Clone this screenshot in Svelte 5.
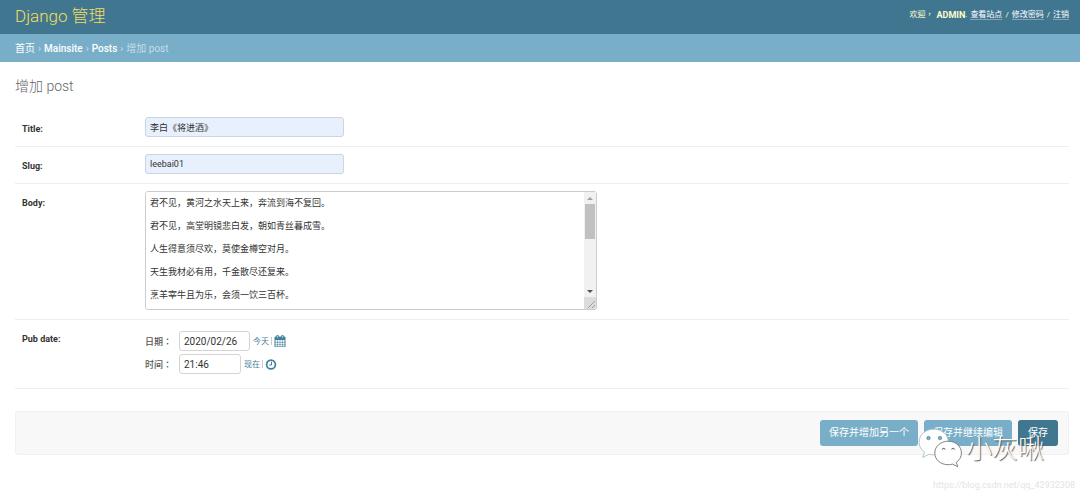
<script>
  let title = $state('李白《将进酒》');
  let slug = $state('leebai01');
  let date = $state('2020/02/26');
  let time = $state('21:46');
  let body = $state(
    [
      '君不见，黄河之水天上来，奔流到海不复回。',
      '君不见，高堂明镜悲白发，朝如青丝暮成雪。',
      '人生得意须尽欢，莫使金樽空对月。',
      '天生我材必有用，千金散尽还复来。',
      '烹羊宰牛且为乐，会须一饮三百杯。',
      '岑夫子，丹丘生，将进酒，杯莫停。',
      '与君歌一曲，请君为我倾耳听。',
      '钟鼓馔玉不足贵，但愿长醉不愿醒。',
      '古来圣贤皆寂寞，惟有饮者留其名。',
      '陈王昔时宴平乐，斗酒十千恣欢谑。',
      '主人何为言少钱，径须沽取对君酌。',
      '五花马，千金裘，呼儿将出换美酒，与尔同销万古愁。'
    ].join('\n')
  );
  let progress = $state(0);
  let area;

  function onScroll(e) {
    const t = e.currentTarget;
    progress = t.scrollTop / Math.max(1, t.scrollHeight - t.clientHeight);
  }
  function step(n) {
    area.scrollBy(0, n);
  }
  function today() {
    const d = new Date();
    date = `${d.getFullYear()}/${String(d.getMonth() + 1).padStart(2, '0')}/${String(d.getDate()).padStart(2, '0')}`;
  }
  function now() {
    time = new Date().toTimeString().slice(0, 5);
  }
</script>

<div class="page">
  <header>
    <h1><a href="#home">Django 管理</a></h1>
    <div class="tools">
      <span class="hello">欢迎，</span>
      <strong>ADMIN</strong><span class="dot">.</span>
      <a href="#site">查看站点</a><span>/</span><a href="#password">修改密码</a><span>/</span><a href="#logout">注销</a>
    </div>
  </header>

  <nav aria-label="breadcrumbs">
    <a href="#home">首页</a><i>›</i><a class="latin" href="#mainsite">Mainsite</a><i>›</i><a class="latin" href="#posts">Posts</a><i>›</i><span>增加 post</span>
  </nav>

  <main>
    <h2>增加 post</h2>
    <form onsubmit={(e) => e.preventDefault()}>
      <div class="row">
        <label class="name" for="title">Title:</label>
        <input id="title" class="wide" type="text" bind:value={title} />
      </div>
      <div class="row">
        <label class="name" for="slug">Slug:</label>
        <input id="slug" class="wide" type="text" bind:value={slug} />
      </div>
      <div class="row">
        <label class="name" for="body">Body:</label>
        <div class="area">
          <textarea id="body" bind:this={area} bind:value={body} onscroll={onScroll}></textarea>
          <div class="bar">
            <button type="button" aria-label="Scroll up" onclick={() => step(-23)}>
              <svg viewBox="0 0 12 12"><path d="M3 8h6L6 5z" fill="#a0a0a0" /></svg>
            </button>
            <div class="track"><div class="thumb" style="top: {progress * 57}%"></div></div>
            <button type="button" aria-label="Scroll down" onclick={() => step(23)}>
              <svg viewBox="0 0 12 12"><path d="M3 5h6L6 8z" fill="#505050" /></svg>
            </button>
            <svg class="grip" viewBox="0 0 12 12"><path d="M4 11l7-7M8 11l3-3" stroke="#a0a0a0" fill="none" /></svg>
          </div>
        </div>
      </div>
      <div class="row pub">
        <span class="name">Pub date:</span>
        <div class="when">
          <div class="line">
            <label for="date">日期：</label>
            <input id="date" class="date" type="text" bind:value={date} />
            <button type="button" class="link" onclick={today}>今天</button><b></b>
            <button type="button" class="icon" aria-label="Calendar">
              <svg viewBox="0 0 12 12">
                <path d="M1 2h10v10H1z" fill="#fff" stroke="#417f9e" />
                <path d="M1 2h10v3H1z" fill="#417f9e" />
                <path d="M3.5 5v7M6 5v7M8.5 5v7M1 7.3h10M1 9.7h10" stroke="#5b93b0" stroke-width=".7" />
                <path d="M3.5 0v3.5M8.5 0v3.5" stroke="#417f9e" stroke-width="2" />
                <path d="M3.5 .7v2.3M8.5 .7v2.3" stroke="#c5dce7" stroke-width=".7" />
              </svg>
            </button>
          </div>
          <div class="line">
            <label for="time">时间：</label>
            <input id="time" class="time" type="text" bind:value={time} />
            <button type="button" class="link" onclick={now}>现在</button><b></b>
            <button type="button" class="icon" aria-label="Clock">
              <svg viewBox="0 0 12 12" fill="none" stroke="#417f9e">
                <circle cx="6" cy="6.500" r="4.400" stroke-width="1.700" />
                <path d="M6.500 3.700v3.300H4.200" />
              </svg>
            </button>
          </div>
        </div>
      </div>
      <div class="submit">
        <button type="submit">保存并增加另一个</button>
        <button type="submit">保存并继续编辑</button>
        <button type="submit" class="default">保存</button>
      </div>
    </form>
  </main>

  <div class="mark">
    <svg viewBox="0 0 44 40">
      <g fill="#fff" stroke="#777" stroke-width=".9" stroke-linejoin="round">
        <path d="M16 2C8 2 2 7.500 2 14.500c0 4 2 7.200 5.200 9.600L5.500 29l6-3c1.500.4 3 .6 4.500.6 8 0 14-5 14-12.100S24 2 16 2z" stroke="#a9c3cf" />
        <path d="M30 13.500c-7.500 0-13 5-13 11.300S22.500 36 30 36c1.500 0 2.800-.2 4-.6l5 2.600-1.500-4.200c3.200-2.200 5-5.300 5-9 0-6.300-5.500-11.300-12.500-11.300z" />
      </g>
      <g fill="#79aec8" stroke="#577f92" stroke-width=".6">
        <circle cx="11" cy="10.500" r="1.700" /><circle cx="22" cy="10.500" r="1.700" />
      </g>
      <path d="M24 21.500q1.500-2.500 3 0M33 21.500q1.500-2.500 3 0" fill="none" stroke="#666" />
    </svg>
    <span>小灰啾</span>
  </div>
  <div class="source">https://blog.csdn.net/qq_42932308</div>
</div>

<style>
  :global(body) { margin: 0; background: #fff; }
  .page {
    position: relative;
    min-height: 100vh;
    color: #333;
    font: 10px/14px Roboto, "Noto Sans CJK SC", sans-serif;
  }
  .page * { box-sizing: border-box; }
  a { color: inherit; text-decoration: none; }
  button, input, textarea { font: inherit; color: inherit; margin: 0; }
  button { padding: 0; border: 0; background: none; cursor: pointer; }
  header {
    display: flex;
    justify-content: space-between;
    align-items: flex-start;
    height: 34px;
    padding: 0 11px 0 15px;
    background: #417690;
    color: #ffc;
  }
  h1 { margin: 0; font-size: 17px; line-height: 32px; font-weight: 300; color: #f5dd5d; }
  .tools { display: flex; gap: 3px; padding-top: 10px; font-size: 8px; line-height: 10px; }
  .tools strong { font-size: 9px; }
  .hello, .line label { font-family: Roboto, "Noto Sans CJK TC", sans-serif; }
  .dot { margin-left: -3px; }
  .tools a { height: 10px; color: #fff; border-bottom: 1px solid #80a4b5; }
  nav {
    display: flex;
    gap: 3px;
    align-items: center;
    height: 28px;
    padding: 2px 15px 0;
    background: #79aec8;
    color: #c4dce8;
  }
  nav a { color: #fff; }
  nav .latin { font-weight: 500; }
  nav i { font-style: normal; }
  main { padding: 15px 11px 40px 15px; }
  h2 { margin: 0 0 15px; font-size: 14px; line-height: 18px; font-weight: 300; color: #666; }
  .row { display: flex; padding: 7px 7px 9px; border-bottom: 1px solid #eee; }
  .name { flex: 0 0 123px; padding-top: 5px; font-size: 9px; font-weight: 700; }
  input {
    height: 20px;
    padding: 0 4px;
    border: 1px solid #d4d4d4;
    border-radius: 3px;
    background: #fff;
    font-size: 9px;
  }
  .wide { width: 199px; background: #e8f0fe; border-color: #ccd4e0; }
  .area { position: relative; width: 452px; height: 119px; }
  textarea {
    display: block;
    width: 100%;
    height: 100%;
    padding: 0 17px 0 4px;
    border: 1px solid #ccc;
    border-radius: 3px;
    font-size: 9px;
    line-height: 23px;
    resize: none;
    scrollbar-width: none;
  }
  .bar {
    position: absolute;
    inset: 1px 1px 1px auto;
    display: flex;
    flex-direction: column;
    width: 12px;
    background: #f1f1f1;
  }
  .bar svg { display: block; width: 12px; height: 12px; }
  .track { position: relative; flex: 1; }
  .thumb { position: absolute; left: 1px; right: 1px; height: 35px; background: #c1c1c1; }
  .bar .grip { background: #dcdcdc; }
  .pub { padding: 11px 7px 14px; }
  .pub .name { padding-top: 1px; }
  .when { display: grid; gap: 3px; }
  .line { display: flex; align-items: center; }
  .line label { width: 34px; padding-top: 2px; font-size: 9px; font-weight: 500; color: #555; }
  .line input { font-size: 10px; }
  .date { width: 71px; }
  .time { width: 62px; }
  .link { margin-left: 3px; padding-top: 2px; font-size: 8px; color: #447e9b; }
  .line b { width: 1px; height: 8px; margin: 0 2px; background: #ccc; }
  .icon svg { display: block; width: 12px; height: 12px; }
  .submit {
    display: flex;
    justify-content: flex-end;
    gap: 6px;
    margin-top: 22px;
    padding: 8px 10px;
    border: 1px solid #f0f0f0;
    border-radius: 3px;
    background: #f8f8f8;
  }
  .submit button {
    height: 26px;
    padding: 0 9px;
    border-radius: 3px;
    background: #79aec8;
    color: #fff;
    font-size: 10px;
  }
  .submit .default { padding: 0 10px; background: #417690; }
  .mark {
    position: absolute;
    top: 426px;
    right: 36px;
    display: flex;
    align-items: center;
    gap: 3px;
    pointer-events: none;
    color: #fff;
    font-size: 26px;
    font-weight: 300;
    line-height: 40px;
    text-shadow: 1px 1px 1px #555;
  }
  .mark svg { width: 46px; height: 42px; }
  .mark span { padding-top: 3px; }
  .source {
    position: absolute;
    top: 478px;
    right: 5px;
    color: #e4e4e4;
    font-size: 9px;
  }
</style>
